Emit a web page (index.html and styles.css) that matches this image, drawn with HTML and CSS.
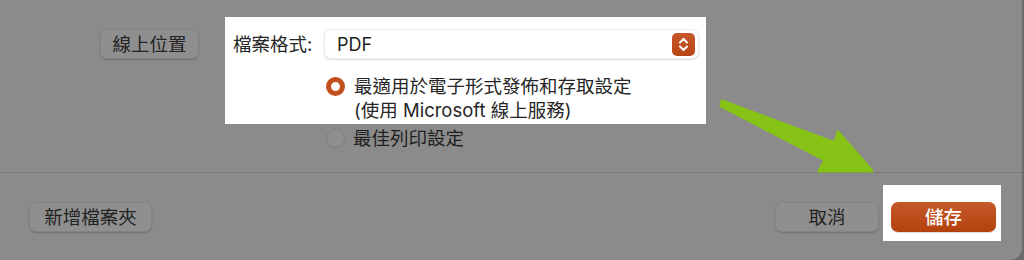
FILE: index.html
```html
<!DOCTYPE html>
<html lang="zh-Hant">
<head>
<meta charset="utf-8">
<title>儲存</title>
<link rel="stylesheet" href="styles.css">
</head>
<body>
<div class="dialog">
  <div class="top">
    <div class="row">
      <button class="btn btn-location">線上位置</button>
      <div class="panel">
        <div class="label">檔案格式:</div>
        <div class="select">
          <span class="select-value">PDF</span>
          <span class="stepper">
            <svg width="23" height="23" viewBox="0 0 23 23">
              <path d="M8 9.5 L11.5 6 L15 9.5" fill="none" stroke="#fff" stroke-width="2" stroke-linecap="round" stroke-linejoin="round"/>
              <path d="M8 13.5 L11.5 17 L15 13.5" fill="none" stroke="#fff" stroke-width="2" stroke-linecap="round" stroke-linejoin="round"/>
            </svg>
          </span>
        </div>
        <div></div>
        <div class="option">
          <span class="radio radio-on"></span>
          <span class="option-text">最適用於電子形式發佈和存取設定<br>(使用 Microsoft 線上服務)</span>
        </div>
      </div>
    </div>
    <div class="option option-print">
      <span class="radio radio-off"></span>
      <span class="option-text">最佳列印設定</span>
    </div>
  </div>
  <div class="footer">
    <button class="btn btn-new">新增檔案夾</button>
    <div class="spacer"></div>
    <button class="btn btn-cancel">取消</button>
    <div class="save-box">
      <button class="btn-save">儲存</button>
    </div>
  </div>
</div>
<svg class="arrow" width="1024" height="260" viewBox="0 0 1024 260">
  <path d="M722 101 L835 143 L838 132 L872 171 L819 171 L825 160 L721 106 Z" fill="#86c316" stroke="#86c316" stroke-width="3" stroke-linejoin="round"/>
</svg>
</body>
</html>
```

FILE: styles.css
```css
* { box-sizing: border-box; }

html, body {
  margin: 0;
  padding: 0;
}

body {
  width: 1024px;
  height: 260px;
  background: #6c6c6c;
  font-family: "Inter", "Noto Sans CJK TC", sans-serif;
  color: #232323;
  overflow: hidden;
  position: relative;
}

.dialog {
  width: 1022px;
  height: 260px;
  background: #8b8b8b;
  border-bottom-right-radius: 12px;
}

.top {
  height: 173px;
  padding: 17px 0 0 100px;
  border-bottom: 1px solid #7b7b7b;
}

.row {
  display: flex;
  align-items: flex-start;
  gap: 26px;
}

.btn {
  font-family: "Inter", "Noto Sans CJK TC", sans-serif;
  font-size: 18.5px;
  color: #232323;
  background: #8f8f8f;
  border: 1px solid rgba(0, 0, 0, 0.08);
  border-radius: 7px;
  box-shadow: 0 1px 1.5px rgba(0, 0, 0, 0.18);
  height: 30px;
  padding: 0;
  line-height: 26px;
  margin: 0;
}

.btn-location {
  width: 99px;
  margin-top: 12px;
}

.panel {
  width: 481px;
  height: 107px;
  background: #ffffff;
  padding: 12px 7px 2px 8px;
  display: grid;
  grid-template-columns: 91px 375px;
  grid-template-rows: 30px auto;
  row-gap: 15px;
}

.label {
  font-size: 18.5px;
  line-height: 30px;
  color: #262626;
}

.select {
  height: 30px;
  background: #fff;
  border: 1px solid rgba(0, 0, 0, 0.07);
  border-radius: 7px;
  box-shadow: 0 1px 2px rgba(0, 0, 0, 0.14);
  display: flex;
  align-items: center;
  padding: 0 3px 0 12px;
}

.select-value {
  flex: 1;
  font-size: 18px;
  color: #222;
}

.stepper {
  width: 23px;
  height: 23px;
  border-radius: 5px;
  background: linear-gradient(#c8582a, #b84516);
  display: flex;
}

.option {
  display: flex;
  align-items: flex-start;
  margin-left: 2px;
}

.option-text {
  font-size: 18.5px;
  line-height: 24px;
  color: #262626;
}

.radio {
  width: 19px;
  height: 19px;
  border-radius: 50%;
  flex: none;
  margin: 2.5px 9px 0 0;
}

.radio-on {
  background: #fff;
  border: 5.5px solid #c2501e;
}

.radio-off {
  background: #8f8f8f;
  border: 1px solid #7c7c7c;
  margin-right: 8px;
}

.option-print {
  margin: 2px 0 0 226px;
}

.option-print .option-text {
  color: #1f1f1f;
}

.footer {
  display: flex;
  align-items: flex-start;
  padding: 12px 21px 0 29px;
}

.btn-new {
  width: 123px;
  margin-top: 17px;
}

.spacer { flex: 1; }

.btn-cancel {
  width: 104px;
  margin-top: 17px;
  margin-right: 4px;
}

.save-box {
  width: 118px;
  height: 56px;
  background: #fff;
  padding: 17px 5px 0 8px;
}

.btn-save {
  width: 105px;
  height: 30px;
  border: none;
  border-radius: 7px;
  background: linear-gradient(#c65a2b, #b3410d);
  color: #fff;
  font-family: "Inter", "Noto Sans CJK TC", sans-serif;
  font-size: 18.5px;
  font-weight: 500;
  padding: 0;
  line-height: 30px;
  box-shadow: 0 1px 1px rgba(0, 0, 0, 0.15);
}

.arrow {
  position: absolute;
  left: 0;
  top: 0;
  pointer-events: none;
}
```
